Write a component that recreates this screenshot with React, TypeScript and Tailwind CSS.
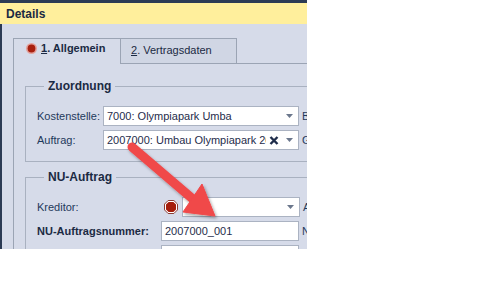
import React from 'react';

const ink = 'text-[#1e395b]';

const DropArrow = () => (
  <svg width="7" height="4" viewBox="0 0 7 4" className="shrink-0">
    <path d="M0 0 H7 L3.5 4 Z" fill="#6b778c" />
  </svg>
);

const ClearX = () => (
  <svg width="10" height="9" viewBox="0 0 10 9" className="shrink-0">
    <path d="M1.5 1 L8.5 8 M8.5 1 L1.5 8" stroke="#1f2d4b" strokeWidth="2.4" />
  </svg>
);

const StopIcon = () => (
  <svg width="14" height="14" viewBox="0 0 14 14" className="shrink-0">
    <path d="M4.1 0.5 H9.9 L13.5 4.1 V9.9 L9.9 13.5 H4.1 L0.5 9.9 V4.1 Z" fill="#fff" stroke="#8c3b32" />
    <path d="M4.6 2 H9.4 L12 4.6 V9.4 L9.4 12 H4.6 L2 9.4 V4.6 Z" fill="#a61e0c" />
  </svg>
);

const TabDot = () => (
  <svg width="11" height="11" viewBox="0 0 11 11" className="shrink-0">
    <circle cx="5.5" cy="5.5" r="5.5" fill="#e3a19c" />
    <circle cx="5.5" cy="5.5" r="3.9" fill="#a8200f" />
  </svg>
);

function Row({
  label,
  labelW,
  bold,
  next,
  children,
}: {
  label: string;
  labelW: string;
  bold?: boolean;
  next: string;
  children: React.ReactNode;
}) {
  return (
    <div className="flex items-center h-[20px] whitespace-nowrap">
      <div className={`${labelW} shrink-0 ${bold ? 'font-bold text-[#1b2a43]' : ink}`}>{label}</div>
      {children}
      <div className={`ml-[3px] ${ink}`}>{next}</div>
    </div>
  );
}

function Field({ w, text, clear, drop }: { w: string; text?: string; clear?: boolean; drop?: boolean }) {
  return (
    <div className={`${w} h-[20px] shrink-0 bg-white border border-[#abb3c2] flex items-center`}>
      <div className="flex-1 min-w-0 overflow-hidden pl-[3px] text-[#1f2d4b] whitespace-nowrap">{text}</div>
      {clear && (
        <div className="w-[12px] flex justify-center ml-[2px] mr-[3px]">
          <ClearX />
        </div>
      )}
      {drop && (
        <div className="w-[12px] flex justify-center mr-[3px]">
          <DropArrow />
        </div>
      )}
    </div>
  );
}

export default function App() {
  return (
    <div className="w-full h-[297px] bg-white">
      <div className="relative w-[307px] h-[249px] overflow-hidden bg-[#d6dbe9] font-['Liberation_Sans',Arial,sans-serif] text-[11px] leading-[14px]">
        <div className="h-[3px] bg-[#2c3b54]" />
        <div className="h-[21px] bg-[#ffef9c] flex items-center pl-[6px] text-[12px] font-bold text-[#1b2a43]">
          Details
        </div>
        <div className="flex h-[225px]">
          <div className="w-[2px] shrink-0 bg-[#2c3b54]" />
          <div className="flex-1 min-w-0 pl-[11px] pt-[14px]">
            {/* tabs */}
            <div className="flex h-[26px]">
              <div className="w-[108px] shrink-0 border-l border-t border-r border-[#9ba4b4] flex items-start pl-[12px] pt-[4px] gap-[4px]">
                <TabDot />
                <span className="font-bold text-[#1b2a43] -mt-[2px]">
                  <span className="underline">1</span>. Allgemein
                </span>
              </div>
              <div className="w-[116px] shrink-0 border-t border-r border-b border-[#9ba4b4] bg-[#d0d6e4] pl-[10px] pt-[4px] text-[#1b2a43]">
                <span className="underline">2</span>. Vertragsdaten
              </div>
              <div className="flex-1 border-b border-[#9ba4b4]" />
            </div>
            {/* page */}
            <div className="h-[200px] border-l border-[#9ba4b4] pl-[11px] pt-[15px]">
              <fieldset className="w-[400px] border border-[#a9b1c0] pl-[11px] pt-[13px] pb-[11px]">
                <legend className="ml-[7px] px-[4px] text-[12px] font-bold text-[#1b2a43]">Zuordnung</legend>
                <div className="flex flex-col gap-[4px]">
                  <Row label="Kostenstelle:" labelW="w-[66px]" next="Bauvorhaben:">
                    <Field w="w-[196px]" text="7000: Olympiapark Umba" drop />
                  </Row>
                  <Row label="Auftrag:" labelW="w-[66px]" next="Gewerk:">
                    <Field w="w-[196px]" text="2007000: Umbau Olympiapark 2007" clear drop />
                  </Row>
                </div>
              </fieldset>
              <fieldset className="mt-[8px] w-[400px] border border-[#a9b1c0] pl-[11px] pt-[13px] pb-[11px]">
                <legend className="ml-[7px] px-[4px] text-[12px] font-bold text-[#1b2a43]">NU-Auftrag</legend>
                <div className="flex flex-col gap-[4px]">
                  <Row label="Kreditor:" labelW="w-[124px]" next="Ansprechpartner:">
                    <div className="ml-[3px] mr-[4px]">
                      <StopIcon />
                    </div>
                    <Field w="w-[118px]" drop />
                  </Row>
                  <Row label="NU-Auftragsnummer:" labelW="w-[124px]" bold next="NU-Nr.:">
                    <Field w="w-[138px]" text="2007000_001" />
                  </Row>
                  <Row label="" labelW="w-[124px]" next="">
                    <Field w="w-[138px]" />
                  </Row>
                </div>
              </fieldset>
            </div>
          </div>
        </div>
        {/* annotation arrow */}
        <svg className="absolute left-0 top-0 pointer-events-none" width="307" height="249">
          <defs>
            <filter id="sh" x="-20%" y="-20%" width="140%" height="140%">
              <feDropShadow dx="1.5" dy="2" stdDeviation="1.5" floodColor="#000" floodOpacity="0.35" />
            </filter>
          </defs>
          <g filter="url(#sh)" fill="#f0484a" stroke="#f0484a">
            <line x1="132" y1="147" x2="194" y2="200" strokeWidth="9" strokeLinecap="round" />
            <path d="M202 184 L183 212 L215 216 Z" strokeWidth="1" strokeLinejoin="round" />
          </g>
        </svg>
      </div>
    </div>
  );
}
